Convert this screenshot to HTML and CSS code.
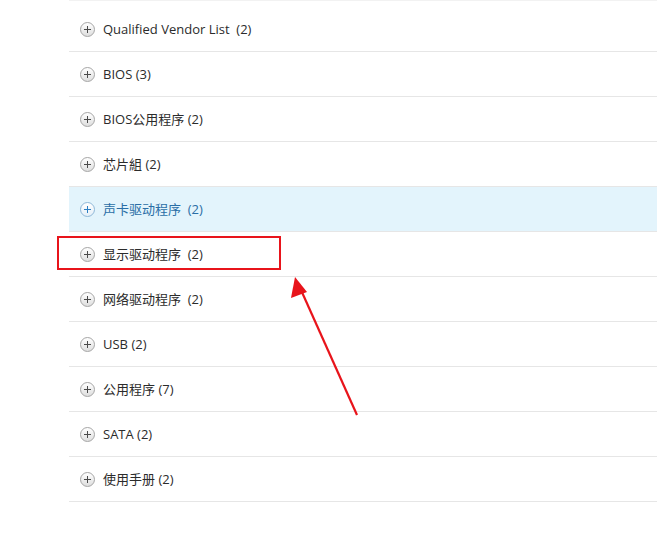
FILE: index.html
```html
<!DOCTYPE html>
<html>
<head>
<meta charset="utf-8">
<link rel="stylesheet" href="styles.css">
</head>
<body>
<div class="page">
  <ul class="list">
    <li class="row"><span class="icon"></span><span class="label">Qualified Vendor List&nbsp; (2)</span></li>
    <li class="row"><span class="icon"></span><span class="label">BIOS (3)</span></li>
    <li class="row"><span class="icon"></span><span class="label">BIOS公用程序 (2)</span></li>
    <li class="row"><span class="icon"></span><span class="label">芯片組 (2)</span></li>
    <li class="row active"><span class="icon"></span><span class="label">声卡驱动程序&nbsp; (2)</span></li>
    <li class="row"><span class="icon"></span><span class="label">显示驱动程序&nbsp; (2)</span></li>
    <li class="row"><span class="icon"></span><span class="label">网络驱动程序&nbsp; (2)</span></li>
    <li class="row"><span class="icon"></span><span class="label">USB (2)</span></li>
    <li class="row"><span class="icon"></span><span class="label">公用程序 (7)</span></li>
    <li class="row"><span class="icon"></span><span class="label">SATA (2)</span></li>
    <li class="row"><span class="icon"></span><span class="label">使用手册 (2)</span></li>
  </ul>
  <div class="highlight-box"></div>
  <svg class="arrow" width="657" height="534" viewBox="0 0 657 534">
    <line x1="357" y1="415" x2="301" y2="290" stroke="#e8141b" stroke-width="2.2"/>
    <polygon points="295,277 307,292 291,298" fill="#e8141b"/>
  </svg>
</div>
</body>
</html>
```
FILE: styles.css
```css
html, body {
  margin: 0;
  padding: 0;
  background: #fff;
}
.page {
  position: relative;
  width: 657px;
  height: 534px;
  overflow: hidden;
}
.list {
  list-style: none;
  margin: 0 0 0 69px;
  padding: 6px 0 0 0;
  border-top: 1px solid #f2f2f2;
}
.row {
  display: flex;
  align-items: center;
  height: 44px;
  border-bottom: 1px solid #e6e6e6;
  padding-left: 11px;
  font-family: "Open Sans", "Noto Sans CJK SC", sans-serif;
  font-size: 13px;
  color: #2b2b2b;
}
.row.active {
  background: #e3f4fc;
  color: #2a6ea6;
}
.icon {
  position: relative;
  box-sizing: border-box;
  width: 15px;
  height: 15px;
  border-radius: 50%;
  border: 1px solid #a5a5a5;
  background: linear-gradient(#ffffff, #dedede);
  margin-right: 8px;
  flex: none;
}
.icon::before,
.icon::after {
  content: "";
  position: absolute;
  background: #4a4a4a;
}
.icon::before {
  left: 3px;
  top: 6px;
  width: 7px;
  height: 1px;
}
.icon::after {
  left: 6px;
  top: 3px;
  width: 1px;
  height: 7px;
}
.row.active .icon {
  border-color: #8fb8d8;
  background: linear-gradient(#ffffff, #e4eff8);
}
.row.active .icon::before,
.row.active .icon::after {
  background: #2a7fc4;
}
.label {
  white-space: pre;
  line-height: 1;
}
.highlight-box {
  position: absolute;
  left: 57px;
  top: 236px;
  width: 220px;
  height: 30px;
  border: 2px solid #e8141b;
}
.arrow {
  position: absolute;
  left: 0;
  top: 0;
}
```
